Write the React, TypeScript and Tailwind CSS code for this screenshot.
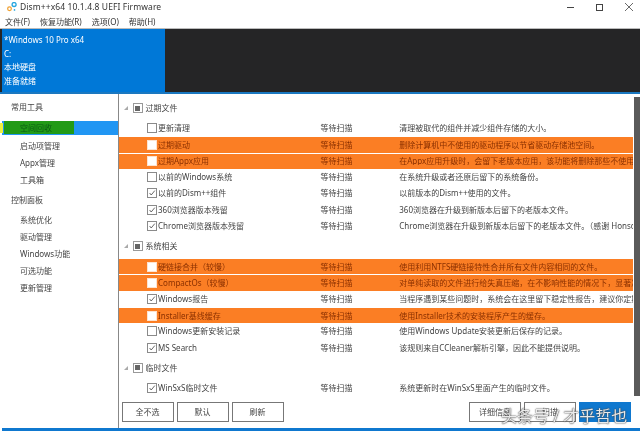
const font = { fontFamily: '"Noto Sans", "Noto Sans CJK SC", sans-serif' };

type Row = { name: string; desc: string; checked?: boolean; hot?: boolean };
type Group = { title: string; rows: Row[] };

const groups: Group[] = [
  {
    title: "过期文件",
    rows: [
      { name: "更新清理", desc: "清理被取代的组件并减少组件存储的大小。" },
      { name: "过期驱动", desc: "删除计算机中不使用的驱动程序以节省驱动存储池空间。", hot: true },
      { name: "过期Appx应用", desc: "在Appx应用升级时，会留下老版本应用，该功能将删除那些不使用的老版本应用。", hot: true },
      { name: "以前的Windows系统", desc: "在系统升级或者还原后留下的系统备份。" },
      { name: "以前的Dism++组件", desc: "以前版本的Dism++使用的文件。", checked: true },
      { name: "360浏览器版本残留", desc: "360浏览器在升级到新版本后留下的老版本文件。", checked: true },
      { name: "Chrome浏览器版本残留", desc: "Chrome浏览器在升级到新版本后留下的老版本文件。（感谢 Honson）", checked: true },
    ],
  },
  {
    title: "系统相关",
    rows: [
      { name: "硬链接合并（较慢）", desc: "使用利用NTFS硬链接特性合并所有文件内容相同的文件。", hot: true },
      { name: "CompactOs（较慢）", desc: "对单纯读取的文件进行给失真压缩，在不影响性能的情况下，显著减少占用空间。", hot: true },
      { name: "Windows报告", desc: "当程序遇到某些问题时，系统会在这里留下稳定性报告，建议你定期清理这些文件。", checked: true },
      { name: "Installer基线缓存", desc: "使用Installer技术的安装程序产生的缓存。", hot: true },
      { name: "Windows更新安装记录", desc: "使用Windows Update安装更新后保存的记录。" },
      { name: "MS Search", desc: "该规则来自CCleaner解析引擎，因此不能提供说明。", checked: true },
    ],
  },
  {
    title: "临时文件",
    rows: [{ name: "WinSxS临时文件", desc: "系统更新时在WinSxS里面产生的临时文件。", checked: true }],
  },
];

const sideTop = ["启动项管理", "Appx管理", "工具箱"];
const sideBottom = ["系统优化", "驱动管理", "Windows功能", "可选功能", "更新管理"];

function Check({ checked, hot }: { checked?: boolean; hot?: boolean }) {
  return (
    <span
      className={`flex h-[10px] w-[10px] shrink-0 items-center justify-center border bg-white ${
        hot ? "border-[#fde3d0]" : "border-[#8a8a8a]"
      }`}
    >
      {checked && (
        <svg viewBox="0 0 10 10" className="h-[8px] w-[8px]" fill="none" stroke="#444" strokeWidth="1">
          <path d="M2 5l2 2.5L8.5 2" />
        </svg>
      )}
    </span>
  );
}

function ListRow({ row }: { row: Row }) {
  return (
    <div
      className={`flex h-[16.3px] items-center whitespace-nowrap ${
        row.hot ? "border-t border-white bg-[#fb7e24] text-[#8a3000]" : "text-[#444]"
      }`}
    >
      <span className="ml-[28px] mr-[1.5px]">
        <Check checked={row.checked} hot={row.hot} />
      </span>
      <span className="w-[163px]">{row.name}</span>
      <span className="w-[79px]">等待扫描</span>
      <span className="w-[234px] overflow-hidden">{row.desc}</span>
    </div>
  );
}

function GroupHead({ title }: { title: string }) {
  return (
    <div className="flex h-[24px] items-center text-[#444]">
      <svg viewBox="0 0 6 6" className="ml-[5px] h-[4px] w-[4px]" fill="#aaa">
        <path d="M6 0v6H0z" />
      </svg>
      <span className="ml-[5px] mr-[3px] flex h-[10px] w-[10px] items-center justify-center border border-[#999] bg-white">
        <span className="h-[5px] w-[5px] bg-[#666]" />
      </span>
      {title}
    </div>
  );
}

function Btn({ label }: { label: string }) {
  return (
    <button className="flex h-[20px] w-[52px] items-center justify-center border border-[#777] bg-white text-[#444]">
      {label}
    </button>
  );
}

export default function App() {
  return (
    <div
      className="relative flex h-[431px] w-[640px] flex-col overflow-hidden bg-white text-[8px] leading-none blur-[0.3px]"
      style={font}
    >
      <div className="flex h-[12px] items-center pl-[7px] pt-[2px] text-[8.5px] tracking-[0.1px] text-[#333]">
        <svg viewBox="0 0 12 12" className="mr-[3px] h-[10px] w-[10px]">
          <circle cx="8.5" cy="3" r="2.4" fill="none" stroke="#29a7df" strokeWidth="1.6" />
          <circle cx="3" cy="8" r="2.2" fill="none" stroke="#f0a030" strokeWidth="1.5" />
          <circle cx="9" cy="9.5" r="1" fill="#29a7df" />
        </svg>
        Dism++x64 10.1.4.8 UEFI Firmware
        <div className="ml-auto mr-[7px] flex items-center gap-[22px]">
          <span className="h-px w-[7px] bg-[#444]" />
          <span className="h-[7px] w-[7px] border border-[#444]" />
          <svg viewBox="0 0 8 8" className="h-[8px] w-[8px]" stroke="#444" strokeWidth="0.8">
            <path d="M0 0l8 8M8 0L0 8" />
          </svg>
        </div>
      </div>

      <div className="flex h-[17px] items-center gap-[10px] border-b border-[#bbb] pl-[5px] pt-[4px] text-[#333]">
        <span>文件(F)</span>
        <span>恢复功能(R)</span>
        <span>选项(O)</span>
        <span>帮助(H)</span>
      </div>

      <div className="flex h-[65px] border-b-2 border-[#1b78c0] bg-[#252526]">
        <div className="ml-[2px] flex w-[163px] flex-col gap-[5.6px] bg-[#0078d7] pl-[2px] pt-[7px] text-white">
          <span>*Windows 10 Pro x64</span>
          <span>C:</span>
          <span>本地硬盘</span>
          <span>准备就绪</span>
        </div>
      </div>

      <div className="flex flex-1">
        <aside className="relative ml-[2px] w-[116.5px] border-r border-[#888] text-[#444]">
          <div className="flex h-[24px] items-end pb-[7px] pl-[9px]">常用工具</div>
          <div className="relative mt-[3px] flex h-[14px] items-center bg-[#2196f3] pl-[18px] text-[#0b5a12]">
            <span className="absolute -left-[2px] top-[2px] h-[10px] w-[3px] bg-[#f0f040]" />
            <span className="absolute left-[2px] top-0 h-[13px] w-[70px] bg-[#229a16]" />
            <span className="relative">空间回收</span>
          </div>
          <div className="mt-[2.5px] flex flex-col pl-[18px]">
            {sideTop.map((s) => (
              <span key={s} className="flex h-[17px] items-center">{s}</span>
            ))}
          </div>
          <div className="flex h-[23px] items-center pl-[9px]">控制面板</div>
          <div className="flex flex-col pl-[18px]">
            {sideBottom.map((s) => (
              <span key={s} className="flex h-[17px] items-center">{s}</span>
            ))}
          </div>
        </aside>

        <main className="relative flex-1 pt-[2px]">
          <div className="w-[514px]">
            {groups.map((g) => (
              <div key={g.title}>
                <GroupHead title={g.title} />
                {g.rows.map((r) => (
                  <ListRow key={r.name} row={r} />
                ))}
              </div>
            ))}
          </div>
          <div className="absolute right-0 top-[3px] h-[299px] w-[6px] bg-[#5a5a5a]" />
          <div className="absolute bottom-[6px] left-[3px] right-[9px] flex gap-[3px]">
            <Btn label="全不选" />
            <Btn label="默认" />
            <Btn label="刷新" />
            <span className="flex-1" />
            <Btn label="详细信息" />
            <Btn label="扫描" />
            <span className="h-[20px] w-[52px] bg-[#0f78cf]" />
          </div>
        </main>
      </div>

      <div className="ml-[2px] h-[3px] bg-[#0f78cf]" />

      <div className="absolute bottom-[7px] left-[501px] whitespace-nowrap text-[16px] text-white/90 [text-shadow:0_0_1px_#222,0_0_2px_#555]">
        头条号 / 才乎哲也
      </div>
    </div>
  );
}
